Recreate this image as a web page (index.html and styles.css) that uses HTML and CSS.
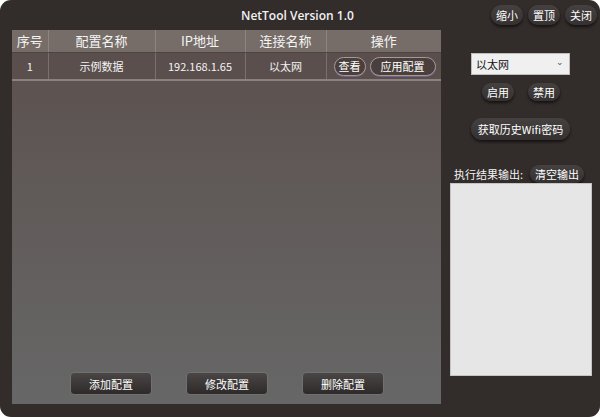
FILE: index.html
```html
<!DOCTYPE html>
<html lang="zh-CN">
<head>
<meta charset="utf-8">
<title>NetTool</title>
<link rel="stylesheet" href="styles.css">
</head>
<body>
<div class="window">
  <div class="titlebar">
    <span class="title">NetTool Version 1.0</span>
    <div class="winbtns">
      <button class="pill">缩小</button>
      <button class="pill">置顶</button>
      <button class="pill">关闭</button>
    </div>
  </div>
  <div class="main">
    <div class="panel">
      <table class="grid">
        <colgroup>
          <col class="c1"><col class="c2"><col class="c3"><col class="c4"><col class="c5">
        </colgroup>
        <thead>
          <tr><th>序号</th><th>配置名称</th><th>IP地址</th><th>连接名称</th><th>操作</th></tr>
        </thead>
        <tbody>
          <tr>
            <td>1</td><td>示例数据</td><td>192.168.1.65</td><td>以太网</td>
            <td class="ops"><button class="rowbtn">查看</button><button class="rowbtn wide">应用配置</button></td>
          </tr>
        </tbody>
      </table>
      <div class="actions">
        <button class="act">添加配置</button>
        <button class="act">修改配置</button>
        <button class="act">删除配置</button>
      </div>
    </div>
    <div class="side">
      <div class="select"><span>以太网</span><span class="chev">&#8964;</span></div>
      <div class="pair">
        <button class="pill">启用</button>
        <button class="pill">禁用</button>
      </div>
      <button class="pill wifi">获取历史Wifi密码</button>
      <div class="outrow">
        <span class="label">执行结果输出:</span>
        <button class="pill clear">清空输出</button>
      </div>
      <div class="output"></div>
    </div>
  </div>
</div>
</body>
</html>
```
FILE: styles.css
```css
* { box-sizing: border-box; }
html, body { margin: 0; padding: 0; }
body {
  background: #ffffff;
  width: 600px;
  height: 417px;
  overflow: hidden;
  font-family: "Noto Sans CJK SC", "Noto Sans", sans-serif;
}
button { font-family: inherit; padding: 0; cursor: pointer; }
.window {
  width: 600px;
  height: 417px;
  background: #322c2b;
  border-radius: 11px;
  display: flex;
  flex-direction: column;
  overflow: hidden;
}
.titlebar {
  height: 30px;
  display: flex;
  align-items: center;
  padding-right: 3px;
}
.title {
  margin-left: 241px;
  color: #f2f2f2;
  font-size: 12px;
  font-family: "Open Sans", "Noto Sans CJK SC", sans-serif;
  font-weight: 600;
  margin-top: 0px;
  flex: 1;
}
.winbtns { display: flex; gap: 5px; margin-top: -1px; }
.pill {
  height: 20px;
  min-width: 32px;
  padding: 0 4px;
  border: none;
  border-radius: 10px;
  background: linear-gradient(#444140, #343130);
  color: #ffffff;
  font-size: 11px;
  line-height: 20px;
  box-shadow: 0 2px 3px rgba(0,0,0,0.6);
}
.main { flex: 1; display: flex; }
.panel {
  margin-left: 12px;
  width: 429px;
  height: 374px;
  background: linear-gradient(#5b504d, #676767);
  display: flex;
  flex-direction: column;
}
.grid {
  border-collapse: collapse;
  width: 429px;
  table-layout: fixed;
  color: #f4f4f4;
}
.c1 { width: 36px; } .c2 { width: 107px; } .c3 { width: 90px; } .c4 { width: 81px; } .c5 { width: 115px; }
.grid th {
  height: 22px;
  background: #776d68;
  font-size: 13px;
  font-weight: normal;
  padding: 0;
  border-left: 1px solid #8e8580;
  border-bottom: 1px solid #4e4542;
}
.grid th:first-child, .grid td:first-child { border-left: none; }
.grid td {
  height: 28px;
  background: #5a4f4c;
  font-size: 11px;
  text-align: center;
  padding: 0;
  border-left: 1px solid #7a706c;
  border-bottom: 2px solid #8b827d;
}
.ops { text-align: left !important; padding-left: 7px !important; }
.rowbtn {
  height: 19px;
  width: 32px;
  border: 1px solid #a59a96;
  border-radius: 10px;
  background: #4a3f3c;
  color: #ffffff;
  font-size: 11px;
  line-height: 16px;
  box-shadow: 0 1px 0 #6f5f8a;
  vertical-align: middle;
}
.rowbtn.wide { width: 66px; margin-left: 4px; }
.actions {
  margin-top: auto;
  margin-bottom: 9px;
  display: flex;
  padding-left: 58px;
  gap: 34px;
}
.act {
  width: 82px;
  height: 23px;
  border: 1px solid #707070;
  border-radius: 4px;
  background: linear-gradient(#4a4645, #2e2a29);
  color: #ffffff;
  font-size: 11px;
}
.side {
  flex: 1;
  display: flex;
  flex-direction: column;
  align-items: flex-start;
  padding-left: 9px;
}
.select {
  margin-top: 23px;
  margin-left: 21px;
  width: 99px;
  height: 22px;
  background: #f0f0f0;
  border: 1px solid #bdbdbd;
  display: flex;
  align-items: center;
  justify-content: space-between;
  padding: 0 5px 0 4px;
  font-size: 11px;
  color: #111;
}
.chev { font-size: 9px; color: #555; line-height: 1; margin-top: -6px; }
.pair { display: flex; gap: 14px; margin-left: 32px; margin-top: 8px; }
.pair .pill { width: 32px; height: 18px; line-height: 18px; }
.wifi { margin-left: 21px; margin-top: 17px; width: 99px; height: 22px; line-height: 22px; border-radius: 11px; }
.outrow {
  margin-top: 25px;
  display: flex;
  align-items: center;
  width: 100%;
}
.label { color: #f2f2f2; font-size: 11px; margin-left: 4px; width: 76px; }
.clear { height: 18px; line-height: 18px; width: 54px; border-radius: 9px; }
.output {
  width: 142px;
  height: 193px;
  background: #e6e6e6;
  border: 1px solid #c4c4c4;
  margin-top: 0px;
}
```
